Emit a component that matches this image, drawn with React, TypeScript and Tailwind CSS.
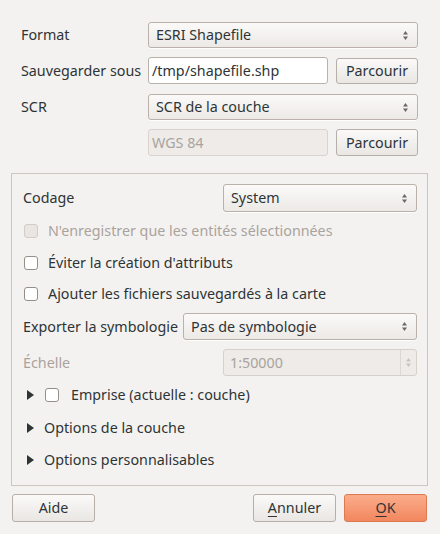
import React from "react";

const ComboArrows = ({ disabled = false }: { disabled?: boolean }) => (
  <svg width="7" height="11" viewBox="0 0 7 11" className="shrink-0">
    <path d="M3.5 1 L6 4.5 H1 Z" fill={disabled ? "#c9c4bf" : "#6a6866"} />
    <path d="M3.5 10 L6 6.5 H1 Z" fill={disabled ? "#c9c4bf" : "#6a6866"} />
  </svg>
);

const Combo = ({ value, className = "" }: { value: string; className?: string }) => (
  <div
    className={`flex items-center justify-between rounded-[3px] border border-[#b9b2ab] bg-gradient-to-b from-[#fbfaf9] to-[#ece9e6] pl-[7px] pr-[8px] shadow-[0_1px_0_rgba(255,255,255,0.8)] ${className}`}
  >
    <span>{value}</span>
    <ComboArrows />
  </div>
);

const Button = ({ children, className = "" }: { children: React.ReactNode; className?: string }) => (
  <div
    className={`flex items-center justify-center rounded-[3px] border border-[#b6afa8] bg-gradient-to-b from-[#fbfaf9] to-[#e9e6e3] ${className}`}
  >
    {children}
  </div>
);

const Check = ({ disabled = false }: { disabled?: boolean }) => (
  <div
    className={`h-[14px] w-[14px] shrink-0 rounded-[3px] border ${
      disabled ? "border-[#d3cdc7] bg-[#e9e5e1]" : "border-[#968f88] bg-white"
    }`}
  />
);

const Arrow = () => (
  <svg width="7" height="10" viewBox="0 0 7 10" className="shrink-0">
    <path d="M0 0 L7 5 L0 10 Z" fill="#2e3436" />
  </svg>
);

export default function App() {
  return (
    <div
      className="h-[534px] w-[440px] bg-[#f4f2f0] text-[14.3px] text-[#2e3436]"
      style={{ fontFamily: '"Noto Sans", "DejaVu Sans", sans-serif' }}
    >
      {/* top form */}
      <div className="flex flex-col pl-[21px] pt-[22px]">
        <div className="flex h-[26px] items-center">
          <span className="w-[127px]">Format</span>
          <Combo value="ESRI Shapefile" className="h-[26px] w-[270px]" />
        </div>
        <div className="mt-[9px] flex h-[27px] items-center">
          <span className="w-[127px]">Sauvegarder sous</span>
          <div className="flex h-[27px] w-[180px] items-center rounded-[3px] border border-[#b9b2ab] bg-white pl-[3px]">
            /tmp/shapefile.shp
          </div>
          <Button className="ml-[8px] h-[26px] w-[82px]">Parcourir</Button>
        </div>
        <div className="mt-[10px] flex h-[26px] items-center">
          <span className="w-[127px]">SCR</span>
          <Combo value="SCR de la couche" className="h-[26px] w-[270px]" />
        </div>
        <div className="mt-[9px] flex h-[27px] items-center">
          <span className="w-[127px]" />
          <div className="flex h-[27px] w-[180px] items-center rounded-[3px] border border-[#d8d3ce] bg-[#eeebe8] pl-[3px] text-[#a9a4a0]">
            WGS 84
          </div>
          <Button className="ml-[8px] h-[27px] w-[82px]">Parcourir</Button>
        </div>
      </div>

      {/* group box */}
      <div className="mx-[11px] mt-[17px] flex h-[313px] w-[417px] flex-col border border-[#cdc6bf] pl-[11px] pr-[10px] pt-[10px]">
        <div className="flex h-[28px] items-center justify-between">
          <span>Codage</span>
          <Combo value="System" className="h-[28px] w-[194px]" />
        </div>
        <div className="mt-[9px] flex h-[20px] items-center gap-[10px] pl-[1px] text-[#aaa39d]">
          <Check disabled />
          <span>N'enregistrer que les entités sélectionnées</span>
        </div>
        <div className="mt-[12px] flex h-[20px] items-center gap-[10px] pl-[1px]">
          <Check />
          <span>Éviter la création d'attributs</span>
        </div>
        <div className="mt-[11px] flex h-[20px] items-center gap-[10px] pl-[1px]">
          <Check />
          <span>Ajouter les fichiers sauvegardés à la carte</span>
        </div>
        <div className="mt-[9px] flex h-[27px] items-center justify-between">
          <span>Exporter la symbologie</span>
          <Combo value="Pas de symbologie" className="h-[27px] w-[234px]" />
        </div>
        <div className="mt-[9px] flex h-[27px] items-center justify-between">
          <span className="text-[#aaa39d]">Échelle</span>
          <div className="flex h-[27px] w-[194px] items-center rounded-[3px] border border-[#d6d0ca] bg-[#eeebe8] text-[#aaa39d]">
            <span className="flex-1 pl-[6px]">1:50000</span>
            <div className="flex h-full w-[16px] items-center justify-center border-l border-[#ddd8d3]">
              <ComboArrows disabled />
            </div>
          </div>
        </div>
        <div className="mt-[9px] flex h-[20px] items-center pl-[4px]">
          <Arrow />
          <div className="ml-[11px]">
            <Check />
          </div>
          <span className="ml-[12px]">Emprise (actuelle : couche)</span>
        </div>
        <div className="mt-[13px] flex h-[20px] items-center pl-[4px]">
          <Arrow />
          <span className="ml-[10px]">Options de la couche</span>
        </div>
        <div className="mt-[12px] flex h-[20px] items-center pl-[4px]">
          <Arrow />
          <span className="ml-[10px]">Options personnalisables</span>
        </div>
      </div>

      {/* buttons */}
      <div className="mt-[8px] flex items-center pl-[12px] pr-[13px]">
        <Button className="h-[28px] w-[83px]">Aide</Button>
        <div className="flex-1" />
        <Button className="h-[28px] w-[83px]">
          <span>
            <span className="underline underline-offset-[3px]">A</span>nnuler
          </span>
        </Button>
        <div className="ml-[8px] flex h-[28px] w-[83px] items-center justify-center rounded-[3px] border border-[#dd7a52] bg-gradient-to-b from-[#fbac8b] to-[#f1875e]">
          <span>
            <span className="underline underline-offset-[3px]">O</span>K
          </span>
        </div>
      </div>
    </div>
  );
}
